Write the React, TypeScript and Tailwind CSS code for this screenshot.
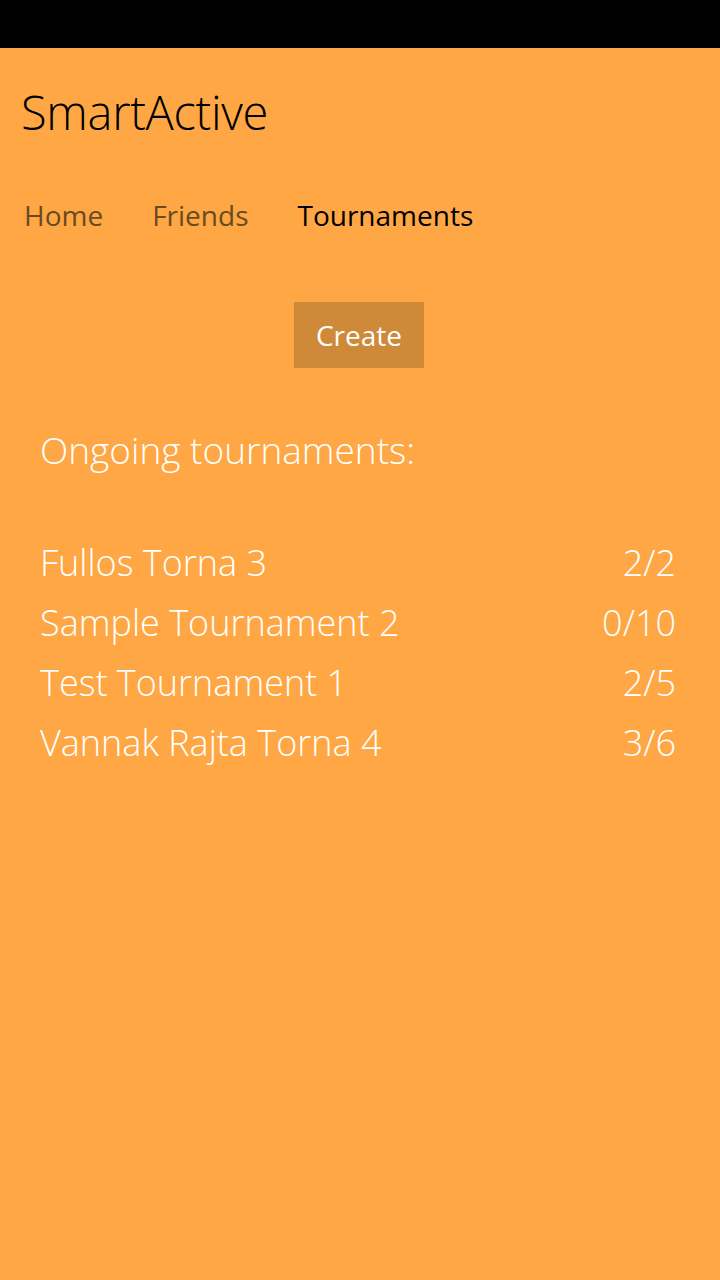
import React from 'react';

const TOURNAMENTS = [
  { name: 'Fullos Torna 3', players: '2/2' },
  { name: 'Sample Tournament 2', players: '0/10' },
  { name: 'Test Tournament 1', players: '2/5' },
  { name: 'Vannak Rajta Torna 4', players: '3/6' },
];

export default function App() {
  return (
    <div className="min-h-[1280px] w-[720px] bg-[#ffa744] font-['Open_Sans',sans-serif] flex flex-col">
      {/* phone status bar */}
      <div className="h-[48px] bg-black" />

      <h1 className="pl-[21px] pt-[32px] text-[47px] font-light leading-[64px] text-black tracking-[-0.3px]">
        SmartActive
      </h1>

      <nav className="flex items-center gap-[49px] pl-[24px] pt-[51px] text-[28px] font-normal leading-[40px]">
        <span className="text-[#6a4a1f]">Home</span>
        <span className="text-[#6a4a1f]">Friends</span>
        <span className="text-black">Tournaments</span>
      </nav>

      <div className="flex justify-center pt-[67px]">
        <button
          type="button"
          className="w-[130px] h-[66px] bg-[#ce8939] text-white text-[28px] font-normal ml-[-2px]"
        >
          Create
        </button>
      </div>

      <div className="px-[40px] pt-[58px]">
        <h2 className="text-[37px] font-light text-white leading-[48px]">Ongoing tournaments:</h2>

        <ul className="mt-[59px] flex flex-col">
          {TOURNAMENTS.map((t) => (
            <li key={t.name} className="flex justify-between text-[36px] font-light text-white leading-[60px] h-[60px]">
              <span>{t.name}</span>
              <span className="pr-[4px]">{t.players}</span>
            </li>
          ))}
        </ul>
      </div>
    </div>
  );
}
